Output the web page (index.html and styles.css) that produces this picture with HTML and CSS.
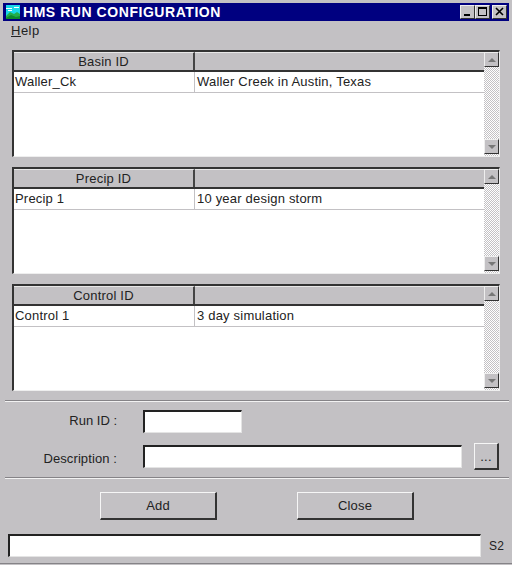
FILE: index.html
```html
<!DOCTYPE html>
<html lang="en">
<head>
    <meta charset="UTF-8">
    <title>HMS Run Configuration</title>
    <link rel="stylesheet" href="styles.css">
</head>
<body>
    <div class="window">
        <div class="titlebar">
            <svg class="app-icon" width="16" height="16" viewBox="0 0 16 16">
                <rect width="16" height="16" fill="#000080"/>
                <rect x="1" y="1" width="14" height="14" fill="#19d8e8"/>
                <path d="M1 4.5h6M9 3.5h5M3 6.5h4" stroke="#fff" fill="none"/>
                <path d="M1 12 L5 8 L9 10 L12 8 L15 10 V15 H1 Z" fill="#22b04a"/>
                <path d="M1 14 L6 11 L11 13 L15 12 V15 H1 Z" fill="#0c8a2c"/>
            </svg>
            <span class="title-text">HMS RUN CONFIGURATION</span>
            <div class="title-buttons">
                <button class="title-btn">
                    <svg width="10" height="10" viewBox="0 0 10 10"><rect x="1" y="7" width="6" height="2" fill="#000"/></svg>
                </button>
                <button class="title-btn">
                    <svg width="10" height="10" viewBox="0 0 10 10"><path d="M0 0h9v9H0z M1 2v6h7V2z" fill="#000" fill-rule="evenodd"/></svg>
                </button>
                <button class="title-btn close-btn">
                    <svg width="10" height="10" viewBox="0 0 10 10"><path d="M1 1l7 7M8 1L1 8" stroke="#000" stroke-width="1.6" fill="none"/></svg>
                </button>
            </div>
        </div>

        <div class="menubar"><span><u>H</u>elp</span></div>

        <!-- Basin table -->
        <div class="panel">
            <div class="table">
                <div class="table-head">
                    <div class="head-cell col-id">Basin ID</div>
                    <div class="head-cell col-desc"></div>
                </div>
                <div class="table-row">
                    <div class="cell col-id">Waller_Ck</div>
                    <div class="cell col-desc">Waller Creek in Austin, Texas</div>
                </div>
            </div>
            <div class="scrollbar">
                <div class="scroll-btn"><span class="arrow-up"></span></div>
                <div class="scroll-btn"><span class="arrow-down"></span></div>
            </div>
        </div>

        <!-- Precip table -->
        <div class="panel">
            <div class="table">
                <div class="table-head">
                    <div class="head-cell col-id">Precip ID</div>
                    <div class="head-cell col-desc"></div>
                </div>
                <div class="table-row">
                    <div class="cell col-id">Precip 1</div>
                    <div class="cell col-desc">10 year design storm</div>
                </div>
            </div>
            <div class="scrollbar">
                <div class="scroll-btn"><span class="arrow-up"></span></div>
                <div class="scroll-btn"><span class="arrow-down"></span></div>
            </div>
        </div>

        <!-- Control table -->
        <div class="panel">
            <div class="table">
                <div class="table-head">
                    <div class="head-cell col-id">Control ID</div>
                    <div class="head-cell col-desc"></div>
                </div>
                <div class="table-row">
                    <div class="cell col-id">Control 1</div>
                    <div class="cell col-desc">3 day simulation</div>
                </div>
            </div>
            <div class="scrollbar">
                <div class="scroll-btn"><span class="arrow-up"></span></div>
                <div class="scroll-btn"><span class="arrow-down"></span></div>
            </div>
        </div>

        <div class="divider divider-top"></div>

        <div class="form">
            <div class="form-row">
                <label class="form-label label-run">Run ID :</label>
                <div class="field field-short"></div>
            </div>
            <div class="form-row form-row-desc">
                <label class="form-label label-desc">Description :</label>
                <div class="field field-long"></div>
                <button class="btn btn-dots">...</button>
            </div>
        </div>

        <div class="divider divider-bottom"></div>

        <div class="actions">
            <button class="btn btn-action">Add</button>
            <button class="btn btn-action">Close</button>
        </div>

        <div class="statusbar">
            <div class="field status-field"></div>
            <span class="status-code">S2</span>
        </div>
    </div>
</body>
</html>
```

FILE: styles.css
```css
* {
    box-sizing: border-box;
}
body {
    margin: 0;
    background-color: #c3c1c4;
    font-family: "Liberation Sans", Arial, sans-serif;
    font-size: 13px;
    letter-spacing: 0.2px;
    color: #222;
    overflow: hidden;
}
.window {
    width: 512px;
    height: 564px;
    padding-top: 3px;
    border-bottom: 1px solid #858387;
}

/* Title bar */
.titlebar {
    display: flex;
    align-items: center;
    height: 18px;
    margin: 0 3px;
    padding: 0 2px;
    background-color: #000080;
    color: white;
}
.app-icon {
    flex: none;
}
.title-text {
    margin-left: 2px;
    font-size: 14px;
    font-weight: bold;
    letter-spacing: 0.55px;
    white-space: nowrap;
}
.title-buttons {
    display: flex;
    margin-left: auto;
}
.title-btn {
    display: flex;
    align-items: center;
    justify-content: center;
    width: 15px;
    height: 14px;
    padding: 0;
    border: 1px solid;
    border-color: #eee #333 #333 #eee;
    background-color: #c3c1c4;
}
.close-btn {
    margin-left: 2px;
}

.menubar {
    height: 20px;
    padding: 2px 0 0 11px;
    line-height: 16px;
    letter-spacing: 0.5px;
}

/* Tables */
.panel {
    display: flex;
    width: 488px;
    height: 107px;
    margin: 9px 0 10px 12px;
    border-top: 2px solid #333;
    border-left: 2px solid #333;
    border-right: 1px solid #eee;
    border-bottom: 1px solid #eee;
    background-color: white;
}
.panel + .panel {
    margin-top: 0;
}
.table {
    flex: 1;
    min-width: 0;
}
.table-head {
    display: flex;
    height: 20px;
    background-color: #c3c1c4;
    border-bottom: 2px solid #333;
}
.head-cell {
    text-align: center;
    line-height: 18px;
}
.col-id {
    flex: none;
    width: 181px;
}
.col-desc {
    flex: 1;
}
.head-cell.col-id {
    border-right: 2px solid #444;
    border-top: 1px solid #e8e8e8;
}
.head-cell.col-desc {
    border-top: 1px solid #e8e8e8;
}
.table-row {
    display: flex;
    height: 21px;
    border-bottom: 1px solid #c3c1c4;
    line-height: 20px;
}
.cell {
    padding-left: 1px;
    white-space: nowrap;
}
.cell.col-id {
    border-right: 1px solid #c3c1c4;
}
.cell.col-desc {
    padding-left: 2px;
}

/* Scrollbars */
.scrollbar {
    display: flex;
    flex-direction: column;
    justify-content: space-between;
    flex: none;
    width: 15px;
    padding-bottom: 2px;
    background-color: #c3c1c4;
    background-image: conic-gradient(#fff 25%, #c3c1c4 0 50%, #fff 0 75%, #c3c1c4 0);
    background-size: 2px 2px;
}
.scroll-btn {
    display: flex;
    align-items: center;
    justify-content: center;
    height: 15px;
    border: 1px solid;
    border-color: #eee #333 #333 #eee;
    background-color: #c3c1c4;
}
.arrow-up,
.arrow-down {
    width: 0;
    height: 0;
    border-left: 4px solid transparent;
    border-right: 4px solid transparent;
}
.arrow-up {
    border-bottom: 4px solid #777;
}
.arrow-down {
    border-top: 4px solid #777;
}

.divider {
    height: 2px;
    margin: 0 3px 0 5px;
    border-top: 1px solid #858387;
    border-bottom: 1px solid #f2f2f2;
}
.divider-top {
    margin-top: -1px;
}

/* Run form */
.form {
    height: 75px;
    padding-top: 8px;
}
.form-row {
    display: flex;
    align-items: center;
    height: 23px;
}
.form-row-desc {
    margin-top: 12px;
}
.form-label {
    width: 117px;
    margin-right: 26px;
    text-align: right;
    white-space: nowrap;
}
.label-run {
    padding-bottom: 3px;
    letter-spacing: 0;
}
.label-desc {
    padding-top: 3px;
    letter-spacing: 0.1px;
}
.field {
    height: 23px;
    background-color: white;
    border-top: 2px solid #222;
    border-left: 2px solid #222;
    border-right: 1px solid #e4e4e4;
    border-bottom: 1px solid #e4e4e4;
}
.field-short {
    width: 99px;
}
.field-long {
    width: 319px;
}

/* Buttons */
.btn {
    padding: 0;
    border: 1px solid;
    border-width: 1px 2px 2px 1px;
    border-color: #f6f6f6 #333 #333 #f6f6f6;
    background-color: #c3c1c4;
    font-family: inherit;
    font-size: 13px;
    letter-spacing: inherit;
    color: #222;
}
.btn-dots {
    flex: none;
    width: 25px;
    height: 27px;
    margin-left: 12px;
}
.actions {
    display: flex;
    gap: 80px;
    height: 55px;
    padding: 13px 0 0 100px;
}
.btn-action {
    width: 117px;
    height: 28px;
}

/* Status line */
.statusbar {
    display: flex;
    align-items: center;
    margin-left: 8px;
}
.status-field {
    width: 473px;
    height: 23px;
}
.status-code {
    margin-left: 8px;
    font-size: 12px;
}
```
